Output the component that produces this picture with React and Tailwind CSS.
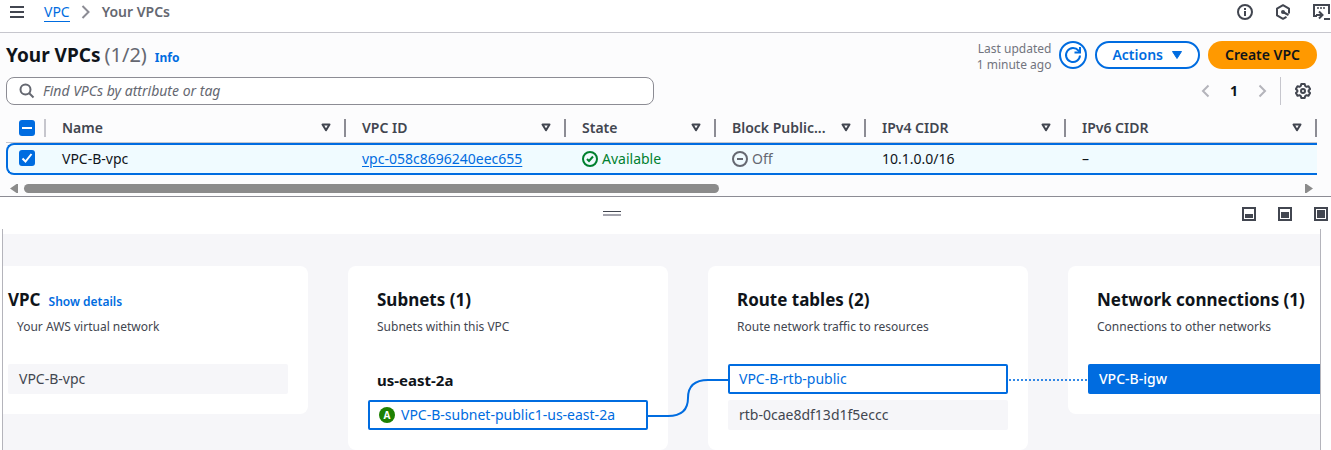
const columns = [
  { label: "Name", width: "w-[300px]" },
  { label: "VPC ID", width: "w-[220px]" },
  { label: "State", width: "w-[150px]" },
  { label: "Block Public...", width: "w-[150px]" },
  { label: "IPv4 CIDR", width: "w-[200px]" },
  { label: "IPv6 CIDR", width: "" },
];

function TopBar() {
  return (
    <header className="flex h-[33px] items-start justify-between border-b border-[#c6c6cd] bg-white pl-[9px]">
      <nav aria-label="Breadcrumb" className="flex h-6 items-center text-sm">
        <button type="button" aria-label="Open navigation" className="text-[#424650]">
          <svg width="16" height="16" viewBox="0 0 16 16" fill="none" stroke="currentColor" strokeWidth="2">
            <path d="M1 3h14M1 8h14M1 13h14" />
          </svg>
        </button>
        <a href="#vpc" className="ml-[19px] border-b border-[#006ce0] leading-[19px] text-[#006ce0]">VPC</a>
        <svg className="mx-2" width="16" height="16" viewBox="0 0 16 16" fill="none" stroke="#8c8c94" strokeWidth="2">
          <path d="M4.500 2l6 6-6 6" />
        </svg>
        <span className="font-semibold text-[#656871]">Your VPCs</span>
      </nav>
      <div className="flex h-6 items-center gap-[22px] text-[#424650]">
        <button type="button" aria-label="Info">
          <svg width="16" height="16" viewBox="0 0 16 16" fill="none" stroke="currentColor" strokeWidth="2">
            <circle cx="8" cy="8" r="7" />
            <path d="M8 7v5M8 4v2" />
          </svg>
        </button>
        <button type="button" aria-label="Diagnostics">
          <svg width="16" height="16" viewBox="0 0 16 16" fill="none" stroke="currentColor" strokeWidth="2" strokeLinejoin="round">
            <path d="M14 9.500V4.600L8 1.200 2 4.600v6.800l6 3.400 3.500-2" />
            <path d="M8 8l5.500 3" />
            <circle cx="8" cy="8" r="2" fill="currentColor" stroke="none" />
          </svg>
        </button>
        <button type="button" aria-label="CloudShell">
          <svg width="18" height="16" viewBox="0 0 18 16" fill="none" stroke="currentColor" strokeWidth="2">
            <path d="M4 12H1V1h15v9" />
            <path d="M4 4h2M7 4h2M10 4h2" strokeWidth="1.500" />
            <path d="M3 11h6M6 7.500L9.500 11 6 14.500M11 15h6" />
          </svg>
        </button>
      </div>
    </header>
  );
}

function TitleRow() {
  return (
    <div className="flex items-start justify-between pr-[14px]">
      <div className="flex h-7 items-baseline">
        <h1 className="text-[19px] leading-7 font-bold">Your VPCs</h1>
        <span className="ml-1 text-xl leading-7 text-[#656871]">(1/2)</span>
        <a href="#info" className="ml-2 text-xs font-bold text-[#006ce0]">Info</a>
      </div>
      <div className="flex items-start gap-2">
        <p className="text-right text-xs leading-4 text-[#72747e]">
          Last updated
          <br />1 minute ago
        </p>
        <button type="button" aria-label="Refresh" className="flex size-7 items-center justify-center rounded-full border-2 border-[#006ce0] bg-white text-[#006ce0]">
          <svg width="18" height="18" viewBox="0 0 18 18" fill="none" stroke="currentColor" strokeWidth="2">
            <path d="M16 9.500A7 7 0 1 1 14.500 4.700L16 6.500" />
            <path d="M16 1v5.500h-5.500" />
          </svg>
        </button>
        <button type="button" className="flex h-7 items-center gap-2 rounded-full border-2 border-[#006ce0] bg-white px-[15px] text-sm font-semibold text-[#006ce0]">
          Actions
          <svg width="12" height="10" viewBox="0 0 12 10" fill="currentColor" stroke="currentColor" strokeLinejoin="round">
            <path d="M1.500 1.500h9L6 8.500z" />
          </svg>
        </button>
        <button type="button" className="h-7 rounded-full bg-[#ff9900] px-[17px] text-sm font-semibold">Create VPC</button>
      </div>
    </div>
  );
}

function Chevron({ d, label }) {
  return (
    <button type="button" aria-label={label} className="text-[#b4b4bb]">
      <svg width="16" height="16" viewBox="0 0 16 16" fill="none" stroke="currentColor" strokeWidth="2">
        <path d={d} />
      </svg>
    </button>
  );
}

function FilterRow() {
  return (
    <div className="mt-1 flex items-center justify-between pr-[6px]">
      <label className="flex h-7 w-full max-w-[648px] items-center gap-2 rounded-lg border border-[#8c8c94] bg-white px-3">
        <svg className="shrink-0" width="16" height="16" viewBox="0 0 16 16" fill="none" stroke="#656871" strokeWidth="2">
          <circle cx="6.500" cy="6.500" r="5" />
          <path d="M10 10l4.500 4.500" />
        </svg>
        <input
          type="text"
          aria-label="Find VPCs"
          placeholder="Find VPCs by attribute or tag"
          className="w-full bg-transparent text-sm italic outline-none placeholder:text-[#656871]"
        />
      </label>
      <div className="flex items-center pr-[14px]">
        <Chevron label="Previous page" d="M10.500 2.500L5 8l5.500 5.500" />
        <span className="w-10 text-center text-sm font-bold">1</span>
        <Chevron label="Next page" d="M5.500 2.500L11 8l-5.500 5.500" />
        <span className="ml-[10px] h-7 w-px bg-[#c6c6cd]" />
        <button type="button" aria-label="Preferences" className="ml-[14px] text-[#424650]">
          <svg width="16" height="16" viewBox="0 0 16 16" fill="none" stroke="currentColor" strokeWidth="2" strokeLinejoin="round">
            <path d="M6.300 1h3.400l.5 2 1.300.8 2-.6 1.600 2.900L13.600 7.400v1.200l1.500 1.300-1.600 2.900-2-.6-1.300.8-.5 2H6.300l-.5-2-1.300-.8-2 .6L.9 9.900l1.500-1.300V7.400L.9 6.100l1.600-2.900 2 .6L5.800 3z" />
            <circle cx="8" cy="8" r="2" />
          </svg>
        </button>
      </div>
    </div>
  );
}

function Checkbox({ label, mark }) {
  return (
    <span className="relative block size-4">
      <input type="checkbox" defaultChecked aria-label={label} className="block size-4 appearance-none rounded-[3px] bg-[#006ce0]" />
      <svg className="pointer-events-none absolute inset-0" width="16" height="16" viewBox="0 0 16 16" fill="none" stroke="white" strokeWidth="2">
        <path d={mark} />
      </svg>
    </span>
  );
}

function VpcTable() {
  const cell = "border-y-2 border-[#006ce0] pl-4";
  return (
    <table className="w-full table-fixed border-separate border-spacing-0 text-left text-sm">
      <thead>
        <tr className="h-[38px] text-[#424650]">
          <th className="w-10 border-b border-[#c6c6cd] p-0 pt-2">
            <div className="flex items-center justify-between pl-[13px]">
              <Checkbox label="Select all VPCs" mark="M3 8h10" />
              <span className="h-[18px] w-[2px] bg-[#c6c6cd]" />
            </div>
          </th>
          {columns.map((c) => (
            <th key={c.label} className={`${c.width} border-b border-[#c6c6cd] p-0 pt-2 font-semibold`}>
              <div className="flex items-center pl-4">
                <span className="whitespace-nowrap">{c.label}</span>
                <button type="button" aria-label={`Sort by ${c.label}`} className="mr-[13px] ml-auto">
                  <svg width="10" height="9" viewBox="0 0 10 9" fill="none" stroke="currentColor" strokeWidth="2" strokeLinejoin="round">
                    <path d="M1.500 1.500h7L5 7.200z" />
                  </svg>
                </button>
                <span className="h-[18px] w-[2px] bg-[#8c8c94]" />
              </div>
            </th>
          ))}
        </tr>
      </thead>
      <tbody>
        <tr className="h-8 bg-[#f0fbff]">
          <td className="rounded-l-lg border-y-2 border-l-2 border-[#006ce0] pb-[2px] pl-[11px]">
            <Checkbox label="Select VPC-B-vpc" mark="M3.500 8.500l3 3 6-7.500" />
          </td>
          <td className={cell}>VPC-B-vpc</td>
          <td className={cell}>
            <a href="#vpc-058c8696240eec655" className="text-[#006ce0] underline underline-offset-2">vpc-058c8696240eec655</a>
          </td>
          <td className={cell}>
            <span className="flex items-center gap-1 text-[#00802f]">
              <svg width="16" height="16" viewBox="0 0 16 16" fill="none" stroke="currentColor" strokeWidth="2">
                <circle cx="8" cy="8" r="7" />
                <path d="M5 8l2 2 4-4.500" />
              </svg>
              Available
            </span>
          </td>
          <td className={cell}>
            <span className="flex items-center gap-1 text-[#656871]">
              <svg width="16" height="16" viewBox="0 0 16 16" fill="none" stroke="currentColor" strokeWidth="2">
                <circle cx="8" cy="8" r="7" />
                <path d="M5 8h6" />
              </svg>
              Off
            </span>
          </td>
          <td className={cell}>10.1.0.0/16</td>
          <td className={cell}>–</td>
        </tr>
      </tbody>
    </table>
  );
}

function ScrollBar() {
  return (
    <div className="flex h-[21px] items-center gap-[6px] px-1 pt-[6px] text-[#8b8b8b]">
      <svg width="8" height="9" viewBox="0 0 8 9" fill="currentColor">
        <path d="M8 0v9H6.500L0 4.500 6.500 0z" />
      </svg>
      <div className="flex-1">
        <div className="h-[9px] w-[54.500%] rounded-full bg-[#8b8b8b]" />
      </div>
      <svg width="8" height="9" viewBox="0 0 8 9" fill="currentColor">
        <path d="M0 0v9h1.500L8 4.500 1.500 0z" />
      </svg>
    </div>
  );
}

function PanelBar() {
  const sizes = [
    { label: "Small panel", y: 7, h: 4 },
    { label: "Medium panel", y: 5, h: 6 },
    { label: "Full panel", y: 3, h: 8 },
  ];
  return (
    <div className="grid h-8 grid-cols-[1fr_auto_1fr] items-center pr-[3px]">
      <span />
      <button type="button" aria-label="Resize panel" className="mr-[104px] flex w-[18px] flex-col gap-[2px]">
        <span className="h-px w-full bg-[#424650]" />
        <span className="h-[2px] w-full bg-[#a4a4ad]" />
      </button>
      <div className="flex justify-end gap-[22px] text-[#424650]">
        {sizes.map((s) => (
          <button key={s.label} type="button" aria-label={s.label}>
            <svg className="mt-[2px]" width="14" height="14" viewBox="0 0 14 14">
              <rect x="1" y="1" width="12" height="12" fill="none" stroke="currentColor" strokeWidth="2" />
              <rect x="3" y={s.y} width="8" height={s.h} fill="currentColor" />
            </svg>
          </button>
        ))}
      </div>
    </div>
  );
}

function Card({ title, description, children }) {
  return (
    <section className="w-80 shrink-0 rounded-lg bg-white px-5 pt-5 pb-5">
      <div className="flex h-7 items-center">{title}</div>
      <p className="mt-[5px] pl-[9px] text-xs leading-4 text-[#424650]">{description}</p>
      <div className="mt-[29px] flex flex-col gap-[6px]">{children}</div>
    </section>
  );
}

function CardTitle({ children }) {
  return <h2 className="pl-[9px] text-[17px] font-bold whitespace-nowrap">{children}</h2>;
}

const plain = "flex h-[30px] items-center rounded-xs bg-[#f6f6f9] px-[11px] text-sm text-[#424650]";
const outlined = "flex h-[30px] items-center rounded-xs border-2 border-[#006ce0] bg-white px-[9px] text-sm text-[#006ce0]";
const filled = "flex h-[30px] items-center rounded-xs bg-[#006ce0] px-[11px] text-sm font-medium text-white";

function ResourceMap() {
  return (
    <main className="mr-[10px] ml-[2px] flex flex-1 flex-col overflow-hidden border-x border-[#b4b4bb] pt-[5px]">
      <div className="relative -ml-[15px] flex flex-1 items-start gap-10 bg-[#f6f6f9] pt-8">
        <Card
          title={
            <div className="flex items-baseline gap-2">
              <h2 className="text-[17px] font-bold">VPC</h2>
              <a href="#details" className="text-xs font-semibold text-[#006ce0]">Show details</a>
            </div>
          }
          description="Your AWS virtual network"
        >
          <div className={plain}>VPC-B-vpc</div>
        </Card>
        <Card title={<CardTitle>Subnets (1)</CardTitle>} description="Subnets within this VPC">
          <h3 className="flex h-[30px] items-center pt-[2px] pl-[9px] text-[15px] font-bold">us-east-2a</h3>
          <div className={outlined}>
            <span className="mr-[6px] flex size-4 items-center justify-center rounded-full bg-[#1d8102] text-[10px] font-bold text-white">A</span>
            VPC-B-subnet-public1-us-east-2a
          </div>
        </Card>
        <Card title={<CardTitle>Route tables (2)</CardTitle>} description="Route network traffic to resources">
          <div className={outlined}>VPC-B-rtb-public</div>
          <div className={plain}>rtb-0cae8df13d1f5eccc</div>
        </Card>
        <Card title={<CardTitle>Network connections (1)</CardTitle>} description="Connections to other networks">
          <div className={filled}>VPC-B-igw</div>
        </Card>
        <svg className="pointer-events-none absolute top-0 left-0" width="1120" height="216" viewBox="0 0 1120 216" fill="none" stroke="#006ce0" strokeWidth="2">
          <path d="M660 182h20Q700 182 700 164Q700 146 720 146h20" />
          <path d="M1021 146h79" strokeDasharray="2 2" opacity="0.800" />
        </svg>
      </div>
    </main>
  );
}

export default function App() {
  return (
    <div className="flex min-h-screen flex-col overflow-hidden bg-white font-['Noto_Sans',sans-serif] text-[#0f141a]">
      <TopBar />
      <section className="border-b border-[#8c8c94] bg-[#fcfcfd] pt-2 pl-[6px]">
        <TitleRow />
        <FilterRow />
        <div className="mr-[14px]">
          <VpcTable />
          <ScrollBar />
        </div>
      </section>
      <PanelBar />
      <ResourceMap />
    </div>
  );
}
